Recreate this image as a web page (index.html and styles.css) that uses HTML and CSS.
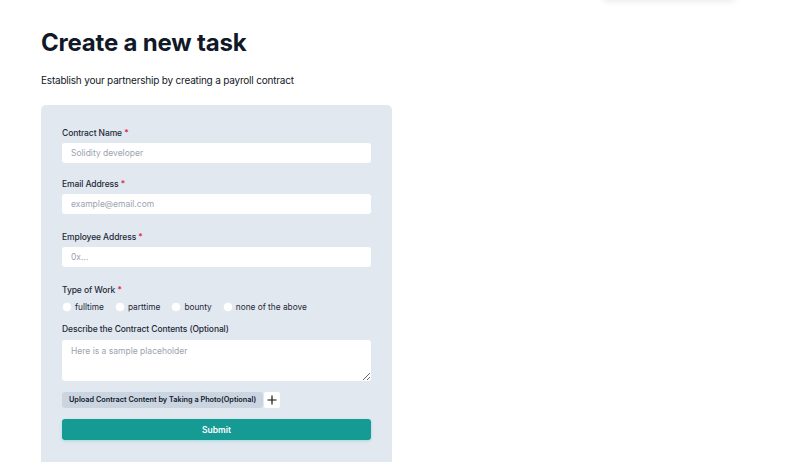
FILE: index.html
```html
<!DOCTYPE html>
<html lang='en'>

<head>
  <meta charset='utf-8'>
  <meta name='viewport' content='width=device-width, initial-scale=1'>
  <title>Create a new task</title>
  <link rel="stylesheet" href="styles.css">
</head>

<body>
  <div class="toast-shadow"></div>
  <main class="page">
    <h1 class="title">Create a new task</h1>
    <p class="subtitle">Establish your partnership by creating a payroll contract</p>

    <form class="card">
      <div class="field">
        <label class="label">Contract Name <span class="req">*</span></label>
        <input class="input" type="text" placeholder="Solidity developer">
      </div>
      <div class="field field-wide">
        <label class="label">Email Address <span class="req">*</span></label>
        <input class="input" type="text" placeholder="example@email.com">
      </div>
      <div class="field field-wide">
        <label class="label">Employee Address <span class="req">*</span></label>
        <input class="input" type="text" placeholder="0x...">
      </div>
      <div class="field field-radio">
        <label class="label">Type of Work <span class="req">*</span></label>
        <div class="radios">
          <label class="radio"><span class="dot"></span>fulltime</label>
          <label class="radio"><span class="dot"></span>parttime</label>
          <label class="radio"><span class="dot"></span>bounty</label>
          <label class="radio"><span class="dot"></span>none of the above</label>
        </div>
      </div>
      <div class="field field-area">
        <label class="label">Describe the Contract Contents (Optional)</label>
        <textarea class="textarea" placeholder="Here is a sample placeholder"></textarea>
      </div>
      <div class="upload">
        <span class="upload-btn">Upload Contract Content by Taking a Photo(Optional)</span>
        <span class="plus">
          <svg width="10" height="10" viewBox="0 0 10 10">
            <path d="M5 0.5v9M0.5 5h9" stroke="#111" stroke-width="1.2" fill="none"/>
          </svg>
        </span>
      </div>
      <button class="submit" type="button">Submit</button>
    </form>
  </main>
</body>

</html>
```

FILE: styles.css
```css
* {
  margin: 0;
  padding: 0;
  box-sizing: border-box;
}

html,
body {
  width: 100%;
  height: 100%;
}

body {
  font-family: Inter, "Noto Sans", sans-serif;
  color: #1f2937;
  background-color: #fff;
  overflow: hidden;
}

.toast-shadow {
  position: absolute;
  top: -40px;
  left: 602px;
  width: 134px;
  height: 40px;
  background-color: #fff;
  box-shadow: 0 2px 6px rgba(0, 0, 0, 0.08);
  border-radius: 6px;
}

.page {
  padding: 27px 41px 0;
}

.title {
  font-size: 24px;
  font-weight: 700;
  color: #111827;
  letter-spacing: -0.2px;
  line-height: 32px;
}

.subtitle {
  margin-top: 13px;
  font-size: 10px;
  line-height: 16px;
  letter-spacing: -0.2px;
  color: #111827;
}

.card {
  margin-top: 17px;
  width: 351px;
  height: 380px;
  background-color: #e2e8f0;
  border-radius: 5px;
  padding: 21px 21px 0;
}

.field {
  display: flex;
  flex-direction: column;
  margin-bottom: 14px;
}

.field-wide {
  margin-bottom: 16px;
}

.label {
  font-size: 8.5px;
  line-height: 14px;
  font-weight: 500;
  letter-spacing: -0.1px;
  color: #1f2937;
  margin-bottom: 3px;
}

.req {
  color: #e11d48;
}

.input {
  height: 20px;
  border: none;
  border-radius: 3px;
  background-color: #fff;
  padding: 0 9px;
  font-family: inherit;
  font-size: 8.5px;
  color: #111827;
  outline: none;
}

.input::placeholder,
.textarea::placeholder {
  color: #9ca3af;
}

.field-radio {
  margin-bottom: 9px;
}

.field-radio .label {
  margin-bottom: 4px;
}

.radios {
  display: flex;
  gap: 12px;
  margin-left: 1px;
}

.radio {
  display: flex;
  align-items: center;
  gap: 4px;
  font-size: 8.3px;
  line-height: 12px;
  color: #1f2937;
}

.dot {
  display: inline-block;
  width: 8px;
  height: 8px;
  border-radius: 50%;
  background-color: #fff;
  box-shadow: 0 0 0 0.5px #eef1f5;
}

.field-area {
  margin-bottom: 11px;
}

.field-area .label {
  margin-bottom: 4px;
}

.textarea {
  height: 41px;
  border: none;
  border-radius: 3px;
  background-color: #fff;
  padding: 6px 9px;
  font-family: inherit;
  font-size: 8.5px;
  resize: vertical;
  outline: none;
}

.upload {
  display: flex;
  align-items: center;
  gap: 1px;
}

.upload-btn {
  display: inline-block;
  height: 16px;
  line-height: 16px;
  padding: 0 7px;
  background-color: #cbd5e1;
  border-radius: 3px;
  font-size: 7.3px;
  font-weight: 600;
  color: #111827;
}

.plus {
  display: inline-flex;
  align-items: center;
  justify-content: center;
  width: 16px;
  height: 16px;
  background-color: #fff;
  border-radius: 2px;
}

.submit {
  display: block;
  width: 100%;
  height: 21px;
  margin-top: 11px;
  border: none;
  border-radius: 3px;
  background-color: #159a94;
  color: #fff;
  font-family: inherit;
  font-size: 8.5px;
  font-weight: 600;
  box-shadow: 0 1px 3px rgba(20, 184, 166, 0.3);
}
```
